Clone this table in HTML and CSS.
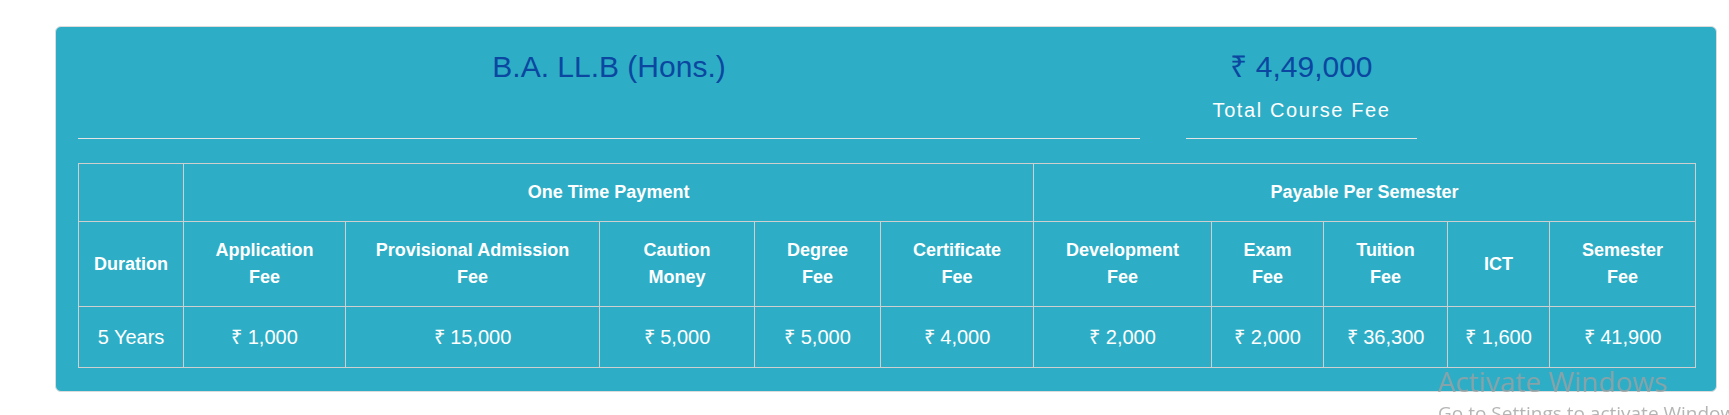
FILE: index.html
```html
<!DOCTYPE html>
<html lang="en">
<head>
<meta charset="utf-8">
<title>B.A. LL.B (Hons.) Fee Structure</title>
<link rel="stylesheet" href="styles.css">
</head>
<body>
<div class="page">
  <section class="fee-card">
    <div class="fee-head">
      <div class="head-col head-title">
        <h2 class="course-name">B.A. LL.B (Hons.)</h2>
      </div>
      <div class="head-col head-total">
        <div class="total-amount">₹ 4,49,000</div>
        <div class="total-label">Total Course Fee</div>
      </div>
    </div>
    <table class="fee-table">
      <colgroup>
        <col class="c-dur">
        <col class="c-app">
        <col class="c-prov">
        <col class="c-caution">
        <col class="c-degree">
        <col class="c-cert">
        <col class="c-dev">
        <col class="c-exam">
        <col class="c-tuition">
        <col class="c-ict">
        <col class="c-sem">
      </colgroup>
      <thead>
        <tr class="group-row">
          <th></th>
          <th colspan="5">One Time Payment</th>
          <th colspan="5">Payable Per Semester</th>
        </tr>
        <tr class="label-row">
          <th>Duration</th>
          <th>Application<br>Fee</th>
          <th>Provisional Admission<br>Fee</th>
          <th>Caution<br>Money</th>
          <th>Degree<br>Fee</th>
          <th>Certificate<br>Fee</th>
          <th>Development<br>Fee</th>
          <th>Exam<br>Fee</th>
          <th>Tuition<br>Fee</th>
          <th>ICT</th>
          <th>Semester<br>Fee</th>
        </tr>
      </thead>
      <tbody>
        <tr class="value-row">
          <td>5 Years</td>
          <td>₹ 1,000</td>
          <td>₹ 15,000</td>
          <td>₹ 5,000</td>
          <td>₹ 5,000</td>
          <td>₹ 4,000</td>
          <td>₹ 2,000</td>
          <td>₹ 2,000</td>
          <td>₹ 36,300</td>
          <td>₹ 1,600</td>
          <td>₹ 41,900</td>
        </tr>
      </tbody>
    </table>
  </section>
</div>
<div class="activation">
  <div class="act-title">Activate Windows</div>
  <div class="act-sub">Go to Settings to activate Windows.</div>
</div>
</body>
</html>
```

FILE: styles.css
```css
* { box-sizing: border-box; }

html, body {
  margin: 0;
  padding: 0;
  background: #ffffff;
  font-family: "Liberation Sans", Arial, sans-serif;
  overflow: hidden;
}

.page {
  padding: 26px 12px 0 55px;
}

.fee-card {
  width: 1662px;
  background: #2daec6;
  border: 1px solid #dcdcdc;
  border-radius: 6px;
  padding: 22px 21px 23px 22px;
}

.fee-head {
  display: grid;
  grid-template-columns: 1062px 231px;
  column-gap: 46px;
}

.head-col {
  border-bottom: 1px solid #e4e4e4;
  text-align: center;
}

.course-name {
  margin: 0;
  font-weight: 400;
  font-size: 30px;
  line-height: 36px;
  color: #0b47a1;
}

.head-total {
  padding-bottom: 13px;
}

.total-amount {
  font-size: 30px;
  line-height: 36px;
  color: #0b47a1;
}

.total-label {
  margin-top: 10px;
  font-size: 20px;
  line-height: 30px;
  letter-spacing: 1.6px;
  color: #ffffff;
}

.fee-table {
  margin-top: 24px;
  width: 1617px;
  table-layout: fixed;
  border-collapse: collapse;
  color: #ffffff;
  text-align: center;
}

.fee-table th,
.fee-table td {
  border: 1px solid #cfcfcf;
  padding: 15px 6px;
  vertical-align: middle;
}

.fee-table th {
  font-size: 18px;
  line-height: 27px;
  font-weight: 700;
}

.group-row th {
  padding: 15px 6px;
}

.fee-table td {
  font-size: 20px;
  line-height: 30px;
  font-weight: 400;
}

.c-dur { width: 105px; }
.c-app { width: 162px; }
.c-prov { width: 254px; }
.c-caution { width: 155px; }
.c-degree { width: 126px; }
.c-cert { width: 153px; }
.c-dev { width: 178px; }
.c-exam { width: 112px; }
.c-tuition { width: 124px; }
.c-ict { width: 102px; }
.c-sem { width: 146px; }

.activation {
  position: fixed;
  left: 1438px;
  top: 362px;
  font-family: "Open Sans", "Noto Sans", sans-serif;
  color: rgba(160, 160, 160, 0.78);
  white-space: nowrap;
  pointer-events: none;
}

.act-title {
  font-size: 28px;
  line-height: 38px;
}

.act-sub {
  font-size: 19px;
  line-height: 26px;
}
```
